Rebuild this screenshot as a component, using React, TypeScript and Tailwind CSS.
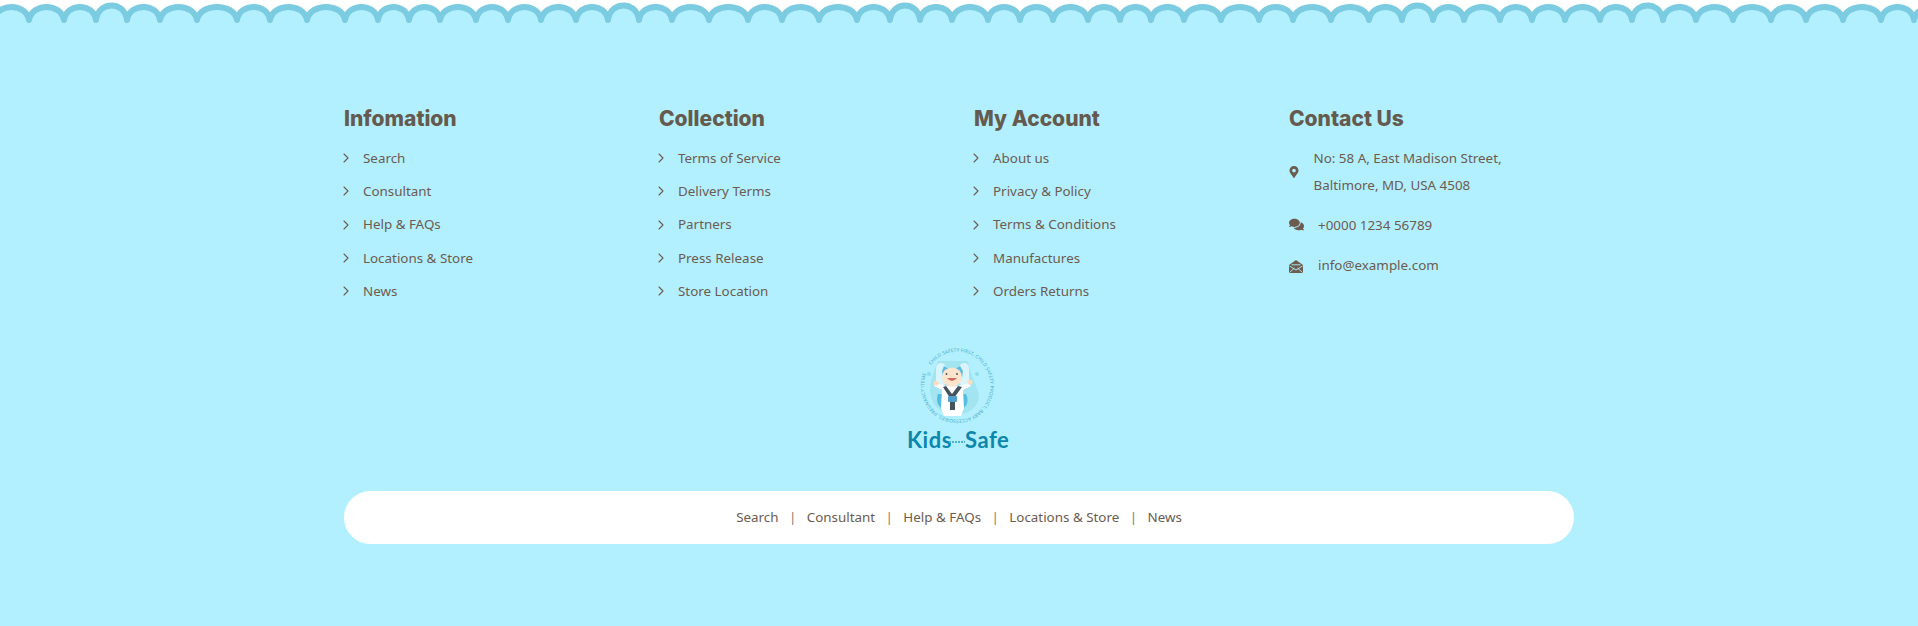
import { ChevronRight } from "lucide-react";
import { FaComments, FaMapMarkerAlt } from "react-icons/fa";

const valleys = [
  -6, 29, 64, 96, 127, 160, 197, 237, 270, 307, 345, 378, 409, 440, 476, 508, 541, 576, 608, 639, 672, 709, 748, 782,
  819, 857, 890, 920, 952, 988, 1020, 1053, 1088, 1120, 1151, 1184, 1221, 1259, 1293, 1331, 1369, 1402, 1433, 1464,
  1500, 1532, 1565, 1600, 1632, 1663, 1696, 1733, 1771, 1806, 1843, 1881, 1914, 1950,
];
const tallArcs = [96, 608, 890, 1402, 1632];

function scallopPath() {
  let d = `M ${valleys[0]} 20`;
  for (let i = 0; i < valleys.length - 1; i++) {
    const a = valleys[i];
    const b = valleys[i + 1];
    const w = b - a;
    const cy = tallArcs.includes(a) ? 0.5 : 2.5;
    d += ` C ${a + w * 0.08} ${cy} ${b - w * 0.08} ${cy} ${b} 20`;
  }
  return d;
}

function Scallops() {
  const d = scallopPath();
  return (
    <svg width="1918" height="30" viewBox="0 0 1918 30" className="block">
      <path d={`${d} L 1950 -5 L -6 -5 Z`} fill="#ffffff" />
      <path d={d} fill="none" stroke="#7bcbe1" strokeWidth="6" strokeLinejoin="round" />
    </svg>
  );
}

const columns = [
  { title: "Infomation", links: ["Search", "Consultant", "Help & FAQs", "Locations & Store", "News"] },
  { title: "Collection", links: ["Terms of Service", "Delivery Terms", "Partners", "Press Release", "Store Location"] },
  { title: "My Account", links: ["About us", "Privacy & Policy", "Terms & Conditions", "Manufactures", "Orders Returns"] },
];

const bottomLinks = ["Search", "Consultant", "Help & FAQs", "Locations & Store", "News"];

function Heading({ children }: { children: string }) {
  return <h4 className="text-[21px] leading-[30px] font-extrabold text-[#655a4e] font-['Inter',sans-serif]">{children}</h4>;
}

function MailIcon() {
  return (
    <svg width="14" height="13" viewBox="0 0 14 13" className="shrink-0 mt-[2px]">
      <path d="M0 5 L7 0 L14 5 V13 H0 Z" fill="#6b5c4f" />
      <path d="M2.5 4.8 H11.5 M0.5 12.5 L5.5 8 M13.5 12.5 L8.5 8 M0.5 6 L7 10 L13.5 6" fill="none" stroke="#b3f0ff" strokeWidth="0.9" />
    </svg>
  );
}

function Logo() {
  return (
    <svg width="140" height="125" viewBox="0 0 140 125" className="block">
      <defs>
        <path id="ring" d="M 42 30 A 33 34 0 1 1 40 33" />
      </defs>
      <text fontSize="4.8" fill="#3aa6c4" fontFamily="'Open Sans', sans-serif">
        <textPath href="#ring" textLength="200" lengthAdjust="spacing">
          CHILD SAFETY FIRST, CHILD SAFETY PRODUCT, BABY ACCESSORIES, PREGNANCY ITEMS
        </textPath>
      </text>
      <circle cx="40" cy="39" r="2" fill="#8fdcec" />
      <circle cx="88" cy="39" r="2" fill="#8fdcec" />
      {/* seat */}
      <path d="M 49 26 C 44 38 38 52 43 65 C 47 75 58 80 66 80 C 78 80 89 73 90 62 C 90 52 82 44 79 26 Z" fill="#a2e4ef" />
      <g transform="translate(-3 5)">
        <path d="M 52 54 C 49 62 53 68 59 70 L 59 54 Z M 80 54 C 84 62 80 68 74 70 L 74 54 Z" fill="#55bddf" />
        <rect x="50" y="23" width="10" height="23" rx="5" fill="#d8f4fc" />
        <rect x="73" y="23" width="10" height="23" rx="5" fill="#d8f4fc" />
        <path d="M 56 31 L 58 26 L 62 28.5 L 70 28.5 L 74 26 L 77 31 L 76 38 L 57 38 Z" fill="#62bbe3" />
        {/* baby */}
        <path d="M 48 46 L 56 50 L 55 68 L 58 76 L 75 76 L 78 68 L 77 50 L 85 46 L 83 43 L 72 46 L 60 46 L 50 43 Z" fill="#ffffff" />
        <circle cx="50" cy="43" r="2.6" fill="#fbdcc0" />
        <circle cx="84" cy="42" r="2.6" fill="#fbdcc0" />
        <ellipse cx="66" cy="37" rx="10" ry="9.5" fill="#fde4cc" />
        <path d="M 61 38 Q 66 44 71 38 Z" fill="#d9695f" />
        <circle cx="60.5" cy="34" r="0.9" fill="#4a4a4a" />
        <circle cx="71" cy="34" r="0.9" fill="#4a4a4a" />
        <path d="M 57 47 L 64 58 L 68 58 L 76 47 L 72 46 L 66 54 L 60 46 Z" fill="#46525e" />
        <rect x="62" y="56" width="9" height="6" rx="1" fill="#4f9fcf" />
        <rect x="64" y="62" width="5" height="8" fill="#46525e" />
      </g>
      {/* wordmark */}
      <text x="18" y="113" fontSize="22" fontWeight="700" fill="#0d86ab" fontFamily="'Lato', sans-serif" letterSpacing="0.5">
        Kids
      </text>
      <text x="76" y="113" fontSize="22" fontWeight="700" fill="#0d86ab" fontFamily="'Lato', sans-serif" letterSpacing="0.5">
        Safe
      </text>
      <path d="M 60 107 L 76 107" stroke="#52b3cf" strokeWidth="2" strokeDasharray="2 1" />
    </svg>
  );
}

export default function App() {
  return (
    <div className="w-[1918px] h-[626px] overflow-hidden bg-[#b3f0ff] font-['Noto_Sans',sans-serif] text-[13.4px] text-[#6b5c4f]">
      <Scallops />

      <div className="w-[1230px] mx-auto pt-[74px]">
        <div className="grid grid-cols-[repeat(4,315px)] -mr-[30px]">
          {columns.map((col) => (
            <div key={col.title}>
              <Heading>{col.title}</Heading>
              <ul className="mt-[12px] flex flex-col gap-[9.25px]">
                {col.links.map((link) => (
                  <li key={link} className="flex items-center h-[24px]">
                    <ChevronRight size={16} strokeWidth={1.6} className="-ml-[6px] mr-[9px]" />
                    <span>{link}</span>
                  </li>
                ))}
              </ul>
            </div>
          ))}

          <div>
            <Heading>Contact Us</Heading>
            <div className="mt-[11px] flex items-center gap-[14px]">
              <FaMapMarkerAlt size={12} className="-ml-[1.5px]" />
              <p className="leading-[27px]">
                No: 58 A, East Madison Street,
                <br />
                Baltimore, MD, USA 4508
              </p>
            </div>
            <div className="mt-[13px] flex items-center gap-[14px] h-[26px]">
              <FaComments size={15} className="-mt-[2px]" />
              <span>+0000 1234 56789</span>
            </div>
            <div className="mt-[14px] flex items-center gap-[15px] h-[26px]">
              <MailIcon />
              <span>info@example.com</span>
            </div>
          </div>
        </div>

        <div className="mt-[32px] flex justify-center">
          <Logo />
        </div>

        <div className="mt-[31px] h-[53px] rounded-full bg-white flex items-center justify-center gap-[10.4px]">
          {bottomLinks.map((link, i) => (
            <div key={link} className="flex items-center gap-[10.4px]">
              {i > 0 && <span className="text-[#8a7a66]">|</span>}
              <span>{link}</span>
            </div>
          ))}
        </div>
      </div>
    </div>
  );
}
